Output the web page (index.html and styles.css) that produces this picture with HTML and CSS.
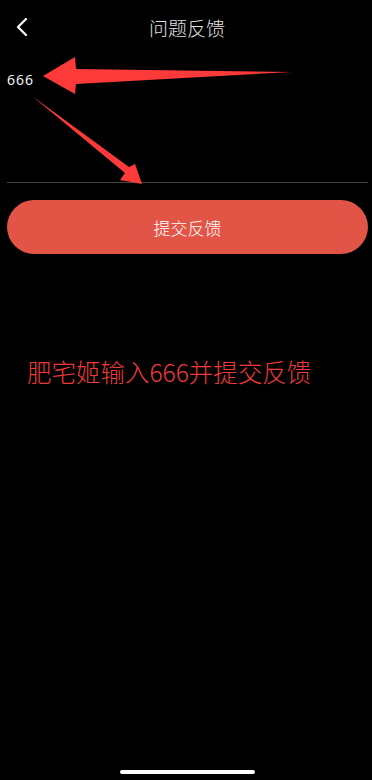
FILE: index.html
```html
<!DOCTYPE html>
<html lang="zh">
<head>
<meta charset="utf-8">
<title>问题反馈</title>
<link rel="stylesheet" href="styles.css">
</head>
<body>
<div class="page">
  <header class="nav">
    <button class="back" aria-label="返回">
      <svg width="12" height="18" viewBox="0 0 12 18"><path d="M10 1 L2 9 L10 17" fill="none" stroke="#fff" stroke-width="2.2" stroke-linecap="round" stroke-linejoin="round"/></svg>
    </button>
    <h1 class="title">问题反馈</h1>
    <span></span>
  </header>
  <div class="field"><span class="value">666</span></div>
  <button class="submit">提交反馈</button>
  <p class="note">肥宅姬输入666并提交反馈</p>
  <div class="home"></div>
  <svg class="annot" width="372" height="780" viewBox="0 0 372 780">
    <polygon points="43,76 75,57 76,69 292,72 76,84 75,94" fill="#fd3a3a"/>
    <polygon points="32,96 129,167 135,164 142,184 120,180 125,173" fill="#fd3a3a"/>
  </svg>
</div>
</body>
</html>
```
FILE: styles.css
```css
html, body {
  margin: 0;
  padding: 0;
  background: #000;
}
body {
  font-family: "Noto Sans CJK SC", "Noto Sans", sans-serif;
  color: #fff;
}
.page {
  position: relative;
  width: 372px;
  height: 780px;
  overflow: hidden;
}
.nav {
  height: 56px;
  display: grid;
  grid-template-columns: 48px 1fr 48px;
  align-items: center;
}
.back {
  background: none;
  border: 0;
  padding: 0 0 0 16px;
  height: 56px;
  display: flex;
  align-items: center;
  margin-top: -2px;
}
.title {
  margin: 0 0 0 2px;
  text-align: center;
  font-size: 19px;
  font-weight: 300;
  color: #e2e2e2;
  line-height: 24px;
}
.field {
  margin: 0 4px 0 7px;
  border-bottom: 1px solid #444;
  padding-top: 10px;
  box-sizing: border-box;
  height: 127px;
}
.value {
  font-family: "Noto Sans", "Liberation Sans", sans-serif;
  font-size: 14px;
  letter-spacing: 1px;
  color: #f2f2f2;
  line-height: 20px;
}
.submit {
  display: block;
  width: 361px;
  margin: 17px 0 0 7px;
  height: 54px;
  border: 0;
  border-radius: 27px;
  background: #e25546;
  color: #fff;
  font-family: "Noto Sans CJK SC", sans-serif;
  font-size: 17px;
  font-weight: 300;
}
.note {
  margin: 102px 0 0 27px;
  font-size: 24.5px;
  font-weight: 300;
  line-height: 32px;
  color: #f03a3a;
}
.home {
  position: absolute;
  left: 120px;
  bottom: 6px;
  width: 135px;
  height: 4px;
  border-radius: 2px;
  background: #fff;
}
.annot {
  position: absolute;
  left: 0;
  top: 0;
  pointer-events: none;
}
```
